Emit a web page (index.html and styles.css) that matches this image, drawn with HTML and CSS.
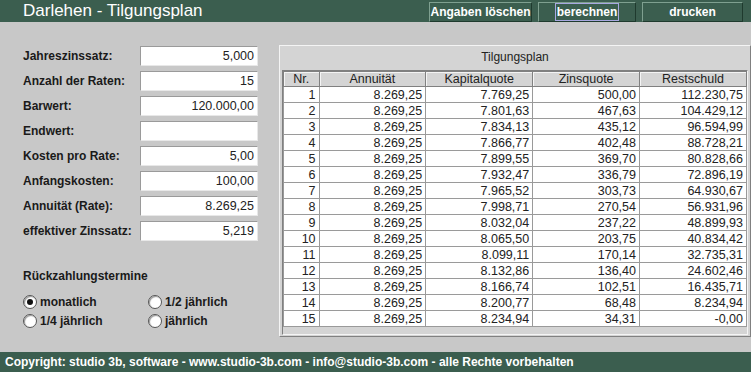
FILE: index.html
```html
<!DOCTYPE html>
<html lang="de">
  <head>
    <meta charset="UTF-8" />
    <title>Darlehen - Tilgungsplan</title>
    <link rel="stylesheet" href="styles.css">
  </head>
  <body>
    <div class="page">
      <!-- top bar -->
      <div class="topbar">
        <h1>Darlehen - Tilgungsplan</h1>
        <div class="buttons">
          <button class="btn btn-clear">Angaben löschen</button>
          <button class="btn btn-calc"><span class="focus">berechnen</span></button>
          <button class="btn btn-print">drucken</button>
        </div>
      </div>

      <div class="main">
        <!-- input form -->
        <div class="form">
          <div class="fields">
            <label>Jahreszinssatz:</label><input type="text" value="5,000">
            <label>Anzahl der Raten:</label><input type="text" value="15">
            <label>Barwert:</label><input type="text" value="120.000,00">
            <label>Endwert:</label><input type="text" value="">
            <label>Kosten pro Rate:</label><input type="text" value="5,00">
            <label>Anfangskosten:</label><input type="text" value="100,00">
            <label>Annuität (Rate):</label><input type="text" value="8.269,25">
            <label>effektiver Zinssatz:</label><input type="text" value="5,219">
          </div>

          <p class="group-title">Rückzahlungstermine</p>
          <div class="radios">
            <label><input type="radio" name="termin" checked> monatlich</label>
            <label><input type="radio" name="termin"> 1/2 jährlich</label>
            <label><input type="radio" name="termin"> 1/4 jährlich</label>
            <label><input type="radio" name="termin"> jährlich</label>
          </div>
        </div>

        <!-- repayment table -->
        <div class="panel">
          <div class="panel-title">Tilgungsplan</div>
          <div class="scroll">
            <table class="plan">
              <thead>
                <tr>
                  <th class="col-nr">Nr.</th>
                  <th>Annuität</th>
                  <th>Kapitalquote</th>
                  <th>Zinsquote</th>
                  <th>Restschuld</th>
                </tr>
              </thead>
              <tbody id="rows"></tbody>
            </table>
          </div>
        </div>
      </div>

      <div class="footer">
        Copyright: studio 3b, software - www.studio-3b.com - info@studio-3b.com - alle Rechte vorbehalten
      </div>
    </div>

    <script>
      // fill the table
      var data = [
        ["500,00", "7.769,25", "112.230,75"],
        ["467,63", "7.801,63", "104.429,12"],
        ["435,12", "7.834,13", "96.594,99"],
        ["402,48", "7.866,77", "88.728,21"],
        ["369,70", "7.899,55", "80.828,66"],
        ["336,79", "7.932,47", "72.896,19"],
        ["303,73", "7.965,52", "64.930,67"],
        ["270,54", "7.998,71", "56.931,96"],
        ["237,22", "8.032,04", "48.899,93"],
        ["203,75", "8.065,50", "40.834,42"],
        ["170,14", "8.099,11", "32.735,31"],
        ["136,40", "8.132,86", "24.602,46"],
        ["102,51", "8.166,74", "16.435,71"],
        ["68,48", "8.200,77", "8.234,94"],
        ["34,31", "8.234,94", "-0,00"]
      ];
      var tbody = document.getElementById("rows");
      for (var i = 0; i < data.length; i++) {
        var tr = document.createElement("tr");
        var cells = [i + 1, "8.269,25", data[i][1], data[i][0], data[i][2]];
        for (var j = 0; j < cells.length; j++) {
          var td = document.createElement("td");
          td.textContent = cells[j];
          tr.appendChild(td);
        }
        tbody.appendChild(tr);
      }
    </script>
  </body>
</html>
```

FILE: styles.css
```css
body {
  margin: 0;
  background-color: #c8c8c8;
  font-family: "Liberation Sans", Arial, sans-serif;
  font-size: 12px;
  color: #1a1a1a;
}

.page {
  width: 751px;
  height: 372px;
  display: flex;
  flex-direction: column;
}

/* top bar */
.topbar {
  height: 22px;
  background-color: #3b5e4f;
  display: flex;
  align-items: center;
  justify-content: space-between;
}
.topbar h1 {
  margin: 0 0 0 23px;
  font-size: 17px;
  font-weight: normal;
  color: white;
  line-height: 22px;
}
.buttons {
  display: flex;
  gap: 6px;
  margin-right: 8px;
  margin-top: 1px;
}
.btn {
  height: 20px;
  background-color: #3b5e4f;
  color: white;
  font-family: "Liberation Sans", Arial, sans-serif;
  font-weight: bold;
  font-size: 12px;
  border: 1px solid;
  border-color: #7fa090 #1f3a2e #1f3a2e #7fa090;
  padding: 0;
  cursor: pointer;
}
.btn-clear {
  width: 103px;
}
.btn-calc {
  width: 98px;
}
.btn-print {
  width: 101px;
}
.btn .focus {
  border: 1px solid #a8a8e0;
  padding: 1px 1px;
}

.main {
  flex: 1;
  display: flex;
}

/* input form */
.form {
  width: 256px;
  padding: 24px 0 0 23px;
}
.fields {
  display: grid;
  grid-template-columns: 117px 118px;
  grid-auto-rows: 20px;
  row-gap: 5px;
  align-items: center;
}
.fields label {
  font-weight: bold;
}
.fields input {
  box-sizing: border-box;
  height: 20px;
  width: 118px;
  border: 1px solid;
  border-color: #9a9a9a #e8e8e8 #e8e8e8 #9a9a9a;
  background: white;
  text-align: right;
  padding: 0 3px;
  font-family: "Liberation Sans", Arial, sans-serif;
  font-size: 12.5px;
  color: #222;
}
.group-title {
  font-weight: bold;
  margin: 28px 0 0 0;
}
.radios {
  display: grid;
  grid-template-columns: 125px 110px;
  grid-auto-rows: 19px;
  margin-top: 9px;
  align-items: center;
}
.radios label {
  font-weight: bold;
  display: flex;
  align-items: center;
  gap: 3px;
}
.radios input {
  appearance: none;
  -webkit-appearance: none;
  margin: 0;
  width: 14px;
  height: 14px;
  border-radius: 50%;
  border: 1px solid #555;
  background: white;
  box-shadow: inset 1px 1px 1px #999;
  display: grid;
  place-items: center;
}
.radios input:checked::after {
  content: "";
  width: 6px;
  height: 6px;
  border-radius: 50%;
  background: #111;
}

/* table panel */
.panel {
  margin-top: 23px;
  width: 466px;
  height: 290px;
  background-color: #d4d4d4;
  border: 1px solid;
  border-color: #f4f4f4 #808080 #808080 #f4f4f4;
  padding: 0 2px;
}
.panel-title {
  height: 24px;
  line-height: 22px;
  text-align: center;
  color: #222;
}
.scroll {
  height: 263px;
  border: 1px solid;
  border-color: #808080 #f4f4f4 #f4f4f4 #808080;
  background-color: #d4d4d4;
}
.plan {
  border-collapse: collapse;
  width: 464px;
  font-size: 12.5px;
  color: #222;
}
.plan th {
  height: 14px;
  padding: 0;
  font-weight: normal;
  background-color: #d4d4d4;
  border: 1px solid #808080;
  box-shadow: inset 1px 1px 0 #f4f4f4;
  width: 107px;
  line-height: 13px;
}
.plan th.col-nr {
  width: 35px;
}
.plan td {
  height: 15px;
  padding: 0 3px 0 0;
  background: white;
  text-align: right;
  border: 1px solid #9a9a9a;
  line-height: 14px;
}

/* footer */
.footer {
  height: 20px;
  line-height: 20px;
  background-color: #3b5e4f;
  color: white;
  font-weight: bold;
  padding-left: 5px;
  margin-top: 13px;
}
```
